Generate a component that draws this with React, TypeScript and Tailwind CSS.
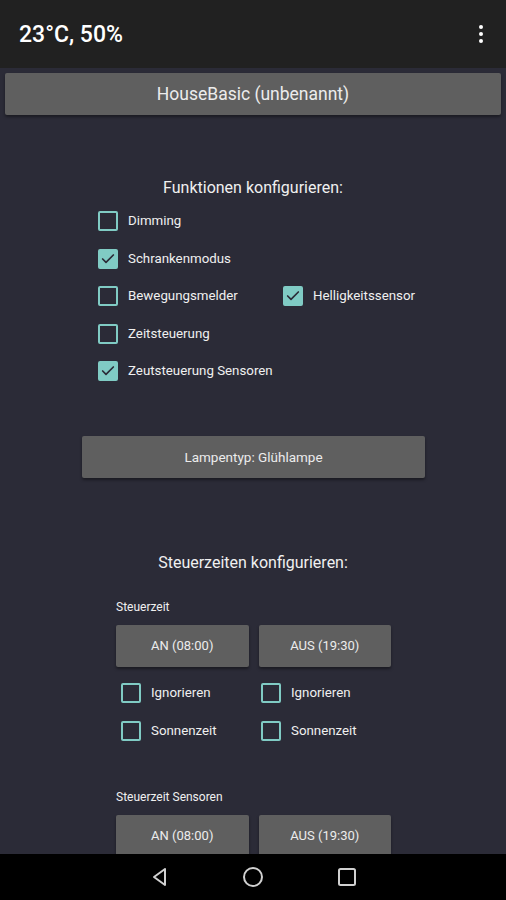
import { Check } from "lucide-react";

type BoxProps = { label: string; checked?: boolean };

function Box({ label, checked = false }: BoxProps) {
  return (
    <div className="flex items-center gap-[10px]">
      <span
        className={
          checked
            ? "flex h-[20px] w-[20px] items-center justify-center rounded-[2px] border-2 border-[#80cbc4] bg-[#80cbc4]"
            : "h-[20px] w-[20px] rounded-[2px] border-2 border-[#80cbc4]"
        }
      >
        {checked && <Check size={16} strokeWidth={2.5} className="text-[#2b2b37]" />}
      </span>
      <span className="text-[13.3px] text-[#f0f0f0]">{label}</span>
    </div>
  );
}

function GrayButton({ children, className = "" }: { children: React.ReactNode; className?: string }) {
  return (
    <div
      className={
        "flex h-[42px] items-center justify-center rounded-[2px] bg-[#5f5f5f] text-[#ececec] shadow-[0_2px_3px_rgba(0,0,0,0.4)] " +
        className
      }
    >
      {children}
    </div>
  );
}

export default function App() {
  return (
    <div className="flex h-[900px] w-[506px] flex-col bg-[#2b2b37] font-['Roboto',sans-serif]">
      <header className="flex h-[68px] shrink-0 items-center justify-between bg-[#212121] pl-[19px] pr-[23px]">
        <span className="pt-[2px] text-[23px] font-medium text-white">23°C, 50%</span>
        <div className="flex flex-col gap-[3px]">
          <span className="h-[4px] w-[4px] rounded-full bg-white" />
          <span className="h-[4px] w-[4px] rounded-full bg-white" />
          <span className="h-[4px] w-[4px] rounded-full bg-white" />
        </div>
      </header>

      <main className="flex-1 overflow-hidden">
        <div className="px-[5px] pt-[5px]">
          <GrayButton className="text-[17.5px]">HouseBasic (unbenannt)</GrayButton>
        </div>

        <p className="mt-[61px] text-center text-[16px] text-[#f0f0f0]">Funktionen konfigurieren:</p>

        <div className="ml-[98px] mt-[11px] flex flex-col gap-[17.5px]">
          <Box label="Dimming" />
          <Box label="Schrankenmodus" checked />
          <div className="flex">
            <div className="w-[185px]">
              <Box label="Bewegungsmelder" />
            </div>
            <Box label="Helligkeitssensor" checked />
          </div>
          <Box label="Zeitsteuerung" />
          <Box label="Zeutsteuerung Sensoren" checked />
        </div>

        <div className="ml-[82px] mt-[55px] w-[343px]">
          <GrayButton className="text-[13.5px]">Lampentyp: Glühlampe</GrayButton>
        </div>

        <p className="mt-[73px] text-center text-[16px] text-[#f0f0f0]">Steuerzeiten konfigurieren:</p>

        <div className="ml-[116px] mt-[23px] w-[275px]">
          <p className="text-[12px] text-[#f0f0f0]">Steuerzeit</p>
          <div className="mt-[9px] grid grid-cols-2 gap-[10px]">
            <GrayButton className="text-[13px]">AN (08:00)</GrayButton>
            <GrayButton className="text-[13px]">AUS (19:30)</GrayButton>
          </div>
          <div className="mt-[16px] grid grid-cols-2 gap-x-[10px] gap-y-[18px] pl-[5px]">
            <Box label="Ignorieren" />
            <Box label="Ignorieren" />
            <Box label="Sonnenzeit" />
            <Box label="Sonnenzeit" />
          </div>

          <p className="mt-[47px] text-[12px] text-[#f0f0f0]">Steuerzeit Sensoren</p>
          <div className="mt-[9px] grid grid-cols-2 gap-[10px]">
            <GrayButton className="text-[13px]">AN (08:00)</GrayButton>
            <GrayButton className="text-[13px]">AUS (19:30)</GrayButton>
          </div>
        </div>
      </main>

      <nav className="flex h-[46px] shrink-0 items-center justify-center gap-[70px] bg-black">
        <svg width="24" height="24" viewBox="0 0 24 24" fill="none" stroke="#d0d0d0" strokeWidth="2" strokeLinejoin="round">
          <path d="M18 4 L7 12 L18 20 Z" />
        </svg>
        <svg width="24" height="24" viewBox="0 0 24 24" fill="none" stroke="#d0d0d0" strokeWidth="2">
          <circle cx="12" cy="12" r="9" />
        </svg>
        <svg width="24" height="24" viewBox="0 0 24 24" fill="none" stroke="#d0d0d0" strokeWidth="2">
          <rect x="4" y="4" width="16" height="16" rx="1.5" />
        </svg>
      </nav>
    </div>
  );
}
